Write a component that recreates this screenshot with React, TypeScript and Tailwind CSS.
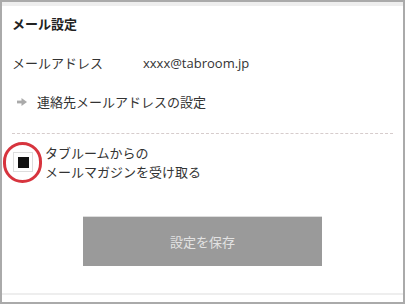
import React from "react";

export default function App() {
  const jp = { fontFamily: '"Noto Sans CJK JP", "Noto Sans", sans-serif' };
  return (
    <div
      className="w-[405px] h-[304px] border-2 border-[#aaaaaa] bg-white flex flex-col text-[13px] text-[#333333]"
      style={jp}
    >
      <div className="h-[4px] bg-[#eeeeee] shrink-0" />
      <div className="flex flex-col px-[10px]">
        <div className="mt-[8px] h-[20px] leading-[20px] font-bold text-[#222222]">メール設定</div>
        <div className="mt-[19px] h-[20px] leading-[20px] flex">
          <span className="w-[131px]">メールアドレス</span>
          <span style={{ fontFamily: '"Open Sans", "Noto Sans CJK JP", sans-serif' }}>xxxx@tabroom.jp</span>
        </div>
        <div className="mt-[19px] h-[20px] leading-[20px] flex items-center pl-[5px]">
          <svg width="10" height="8" viewBox="0 0 10 8" className="mr-[10px]">
            <rect x="0" y="2.6" width="5.5" height="2.8" fill="#aaaaaa" />
            <polygon points="4.5,0 10,4 4.5,8" fill="#aaaaaa" />
          </svg>
          <span>連絡先メールアドレスの設定</span>
        </div>
        <div className="mt-[21px] border-t border-dashed border-[#d6cccc]" />
        <div className="relative mt-[9px] flex items-center">
          <div className="ml-[1px] w-[20px] h-[20px] border border-[#dddddd] bg-white flex items-center justify-center shrink-0">
            <div className="w-[11px] h-[11px] bg-[#111111]" />
          </div>
          <div className="ml-[12px] leading-[19px]">
            <div>タブルームからの</div>
            <div>メールマガジンを受け取る</div>
          </div>
          <div className="absolute left-[-9px] top-[-1px] w-[39px] h-[41px] rounded-full border-[3px] border-[#d7343e]" />
        </div>
        <button className="mt-[35px] mx-auto w-[239px] h-[50px] bg-[#9a9a9a] text-[#e2e2e2] text-[13px] border-t border-[#dddddd]" style={jp}>
          設定を保存
        </button>
      </div>
      <div className="mt-[27px] h-[2px] bg-[#eeeeee] shrink-0" />
    </div>
  );
}
